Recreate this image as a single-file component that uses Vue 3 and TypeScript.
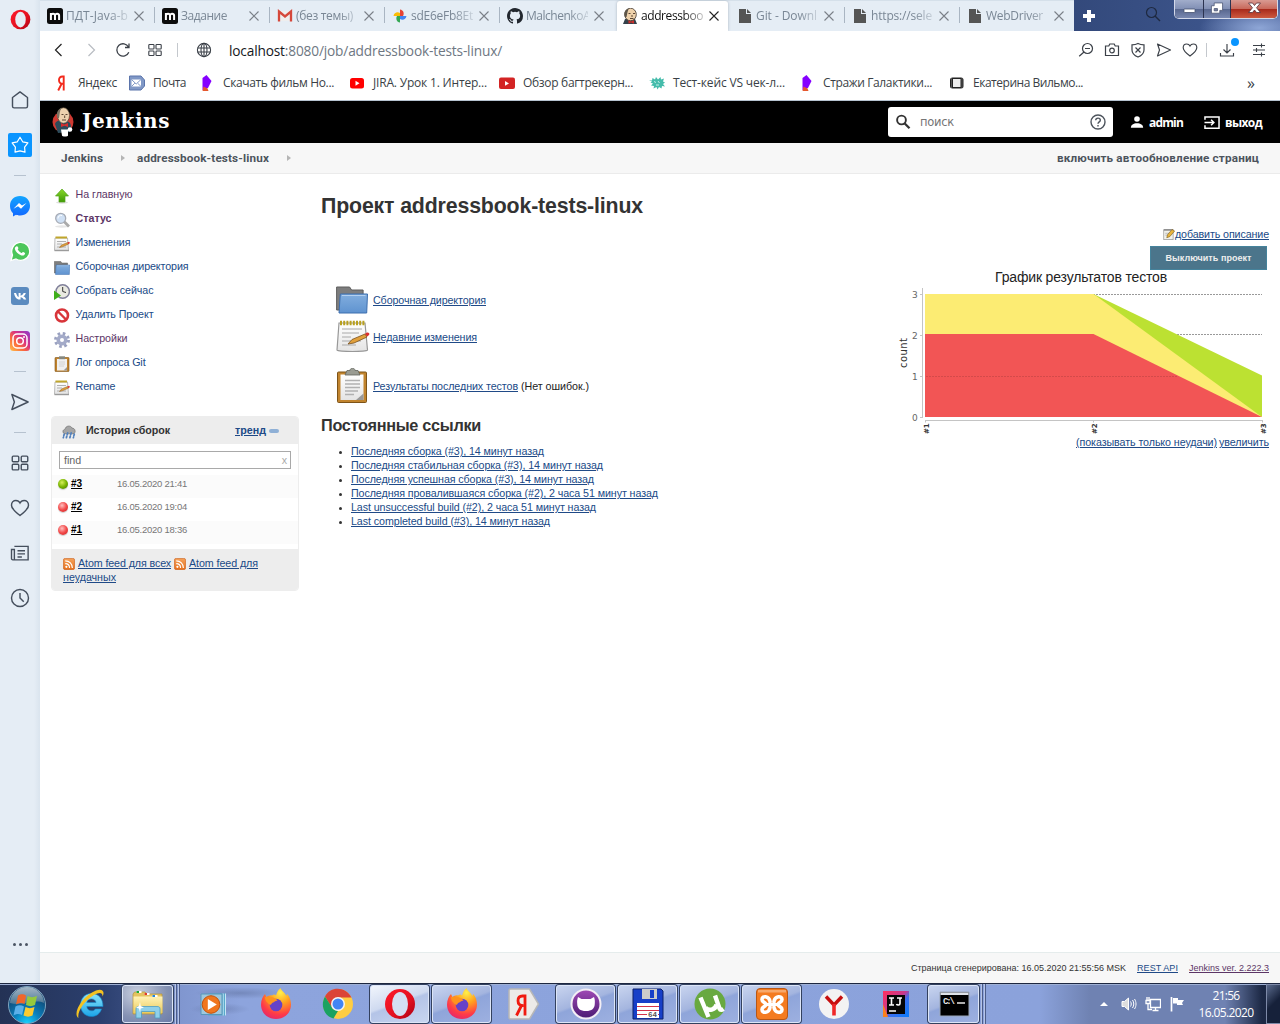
<script setup lang="ts">
interface Tab { icon: string; title: string; width: number; active?: boolean }
interface Item { icon: string; label: string; width: number; bold?: boolean; visited?: boolean }
interface Build { id: string; ok: boolean; date: string }
interface Task { icon: string; kind?: 'open' | 'active' | 'stack' }

// Spreads a label over a given width through letter spacing.
const vFit = {
  mounted(el: HTMLElement, binding: { value: number }) {
    const n = (el.textContent ?? '').trim().length
    const own = el.getBoundingClientRect().width
    if (n && own) el.style.letterSpacing = `${(binding.value - own) / n}px`
  },
}

const tabs: Tab[] = [
  { icon: 'm', title: 'ПДТ-Java-b', width: 62 },
  { icon: 'm', title: 'Задание', width: 46 },
  { icon: 'gmail', title: '(без темы)', width: 57 },
  { icon: 'photos', title: 'sdE6eFb8Et', width: 62 },
  { icon: 'github', title: 'MalchenkoA', width: 64 },
  { icon: 'butler', title: 'addressboo', width: 62, active: true },
  { icon: 'doc', title: 'Git - Downl', width: 61 },
  { icon: 'doc', title: 'https://sele', width: 61 },
  { icon: 'doc', title: 'WebDriver', width: 57 },
]

const rail: string[] = ['home', 'star', '-', 'messenger', 'whatsapp', 'vk', 'insta', '-', 'send', '-', 'grid', 'heart', 'news', 'clock']

const bookmarks = [
  { icon: 'ya', label: 'Яндекс', width: 39, gap: 12 },
  { icon: 'mail', label: 'Почта', width: 33, gap: 13 },
  { icon: 'rocket', label: 'Скачать фильм Но...', width: 111, gap: 15 },
  { icon: 'yt', label: 'JIRA. Урок 1. Интер...', width: 114, gap: 12 },
  { icon: 'yt2', label: 'Обзор багтрекерн...', width: 110, gap: 16 },
  { icon: 'bug', label: 'Тест-кейс VS чек-л...', width: 112, gap: 14 },
  { icon: 'rocket', label: 'Стражи Галактики...', width: 109, gap: 17 },
  { icon: 'film', label: 'Екатерина Вильмо...', width: 110, gap: 0 },
]

const tasks: Item[] = [
  { icon: 'up', label: 'На главную', width: 57, visited: true },
  { icon: 'lens', label: 'Статус', width: 36, bold: true, visited: true },
  { icon: 'note', label: 'Изменения', width: 55 },
  { icon: 'folder', label: 'Сборочная директория', width: 113 },
  { icon: 'run', label: 'Собрать сейчас', width: 78 },
  { icon: 'stop', label: 'Удалить Проект', width: 78 },
  { icon: 'gear', label: 'Настройки', width: 52, visited: true },
  { icon: 'clip', label: 'Лог опроса Git', width: 70 },
  { icon: 'note', label: 'Rename', width: 40 },
]

const builds: Build[] = [
  { id: '#3', ok: true, date: '16.05.2020 21:41' },
  { id: '#2', ok: false, date: '16.05.2020 19:04' },
  { id: '#1', ok: false, date: '16.05.2020 18:36' },
]

const permalinks = [
  { label: 'Последняя сборка (#3), 14 минут назад', width: 193 },
  { label: 'Последняя стабильная сборка (#3), 14 минут назад', width: 252 },
  { label: 'Последняя успешная сборка (#3), 14 минут назад', width: 243 },
  { label: 'Последняя провалившаяся сборка (#2), 2 часа 51 минут назад', width: 307 },
  { label: 'Last unsuccessful build (#2), 2 часа 51 минут назад', width: 245 },
  { label: 'Last completed build (#3), 14 минут назад', width: 199 },
]

const taskbar: Task[] = [
  { icon: 'ie' },
  { icon: 'explorer', kind: 'stack' },
  { icon: 'wmp' },
  { icon: 'firefox' },
  { icon: 'chrome' },
  { icon: 'opera', kind: 'active' },
  { icon: 'firefox', kind: 'open' },
  { icon: 'yatask' },
  { icon: 'ghdesk', kind: 'open' },
  { icon: 'floppy', kind: 'open' },
  { icon: 'utorrent', kind: 'open' },
  { icon: 'xampp', kind: 'open' },
  { icon: 'yabro' },
  { icon: 'idea' },
  { icon: 'cmd', kind: 'stack' },
]
</script>

<template>
  <svg class="sprite" width="0" height="0">
    <defs>
      <linearGradient id="g-opera" x1="0" x2="1" y1="0" y2="1"><stop offset="0" stop-color="#ff1b2d" /><stop offset=".6" stop-color="#e2101f" /><stop offset="1" stop-color="#a70014" /></linearGradient>
      <linearGradient id="g-msg" x1="0" x2="0" y1="0" y2="1"><stop offset="0" stop-color="#12a5ff" /><stop offset="1" stop-color="#1268ff" /></linearGradient>
      <linearGradient id="g-insta" x1="0" x2="1" y1="1" y2="0"><stop offset="0" stop-color="#ffc24a" /><stop offset=".35" stop-color="#fb6a3d" /><stop offset=".6" stop-color="#d83282" /><stop offset="1" stop-color="#8a3bd0" /></linearGradient>
      <linearGradient id="g-folder" x1="0" x2="0" y1="0" y2="1"><stop offset="0" stop-color="#82aede" /><stop offset="1" stop-color="#5f93d0" /></linearGradient>
      <linearGradient id="g-paper" x1="0" x2="0" y1="0" y2="1"><stop offset="0" stop-color="#fff" /><stop offset="1" stop-color="#e4e4e4" /></linearGradient>
      <linearGradient id="g-rss" x1="0" x2="0" y1="0" y2="1"><stop offset="0" stop-color="#f5a25a" /><stop offset="1" stop-color="#e5701c" /></linearGradient>
      <linearGradient id="g-green" x1="0" x2="0" y1="0" y2="1"><stop offset="0" stop-color="#8bd92b" /><stop offset="1" stop-color="#3f9a06" /></linearGradient>
      <radialGradient id="g-orb" cx=".5" cy="1" r=".9"><stop offset="0" stop-color="#18d4ff" /><stop offset=".4" stop-color="#0a80bd" /><stop offset="1" stop-color="#123a63" /></radialGradient>
      <linearGradient id="g-gloss" x1="0" x2="0" y1="0" y2="1"><stop offset="0" stop-color="#d5e2ea" /><stop offset="1" stop-color="#5f7f97" /></linearGradient>
      <radialGradient id="g-ff" cx=".65" cy=".15" r="1"><stop offset="0" stop-color="#fff04a" /><stop offset=".35" stop-color="#ffa01f" /><stop offset=".7" stop-color="#ff3b47" /><stop offset="1" stop-color="#d8207c" /></radialGradient>
      <linearGradient id="g-ie" x1="0" x2="0" y1="0" y2="1"><stop offset="0" stop-color="#8be4fb" /><stop offset="1" stop-color="#1ba4e8" /></linearGradient>
      <linearGradient id="g-gh" x1="0" x2="0" y1="0" y2="1"><stop offset="0" stop-color="#a04ab5" /><stop offset="1" stop-color="#4b1b73" /></linearGradient>
      <linearGradient id="g-yel" x1="0" x2="0" y1="0" y2="1"><stop offset="0" stop-color="#fff3b8" /><stop offset="1" stop-color="#eccb5c" /></linearGradient>
      <linearGradient id="g-idea" x1="0" x2="1" y1="0" y2="1"><stop offset="0" stop-color="#fe315d" /><stop offset=".45" stop-color="#c8388e" /><stop offset=".6" stop-color="#3a6ff0" /><stop offset="1" stop-color="#087cfa" /></linearGradient>
    </defs>

    <!-- Browser tabs -->
    <symbol id="i-m" viewBox="0 0 16 16"><rect width="16" height="16" rx="2.500" fill="#0c0c0c" /><path d="M3.900 12V5M3.900 7.200C4.200 5.600 7.900 5 8 7.400V12M8 7.400c.3-2.300 4-2.100 4.100.2V12" fill="none" stroke="#fff" stroke-width="2" /></symbol>
    <symbol id="i-gmail" viewBox="0 0 16 16"><path d="M1 3h14v10H1z" fill="#eee" /><path d="M2 13.500V3.500l6 5 6-5v10" fill="none" stroke="#d5483b" stroke-width="2.300" /></symbol>
    <symbol id="i-photos" viewBox="0 0 16 16"><path d="M8 1.500c3.500.5 4.500 4 3 6.500H8z" fill="#e84335" /><path d="M14.500 8c-.5 3.500-4 4.500-6.500 3V8z" fill="#4285f4" /><path d="M8 14.500c-3.500-.5-4.500-4-3-6.500h3z" fill="#34a853" /><path d="M1.500 8C2 4.500 5.500 3.500 8 5v3z" fill="#fbbc05" /></symbol>
    <symbol id="i-github" viewBox="0 0 16 16"><path fill="#22272e" d="M8 0C3.580 0 0 3.580 0 8c0 3.540 2.290 6.530 5.470 7.590.4.070.55-.17.55-.38 0-.19-.01-.82-.01-1.490-2.010.37-2.530-.49-2.690-.94-.09-.23-.48-.94-.82-1.130-.28-.15-.68-.52-.01-.53.63-.01 1.080.58 1.230.82.72 1.210 1.870.87 2.330.66.070-.52.28-.87.51-1.070-1.780-.2-3.640-.89-3.640-3.950 0-.87.31-1.590.82-2.150-.08-.2-.36-1.020.08-2.120 0 0 .67-.21 2.200.82a7.500 7.500 0 0 1 4 0c1.530-1.040 2.200-.82 2.200-.82.44 1.100.16 1.920.08 2.120.51.56.82 1.270.82 2.150 0 3.070-1.870 3.750-3.650 3.950.29.25.54.73.54 1.480 0 1.070-.01 1.930-.01 2.200 0 .21.15.46.55.38A8 8 0 0 0 16 8c0-4.420-3.580-8-8-8z" /></symbol>
    <symbol id="i-butler" viewBox="0 0 16 16"><path d="M1 16l2-5h10l2 5z" fill="#34414b" /><ellipse cx="8.500" cy="6.500" rx="5.800" ry="6.300" fill="#efd2ab" stroke="#3c322a" stroke-width=".8" /><path d="M3 9C1.500 5 3 1 7 .4 5.500 2.500 5.500 5 4.500 9z" fill="#5d5548" /><path d="M6.500 5.500h2M11 5.500h2M10 7v2M8 10.500h3.500" stroke="#4b3526" stroke-width=".9" /><path d="M6.500 12.300L9 13.500l3-1.200v3.500l-3-1.200-2.500 1.200z" fill="#c9302c" /></symbol>
    <symbol id="i-doc" viewBox="0 0 16 16"><path d="M2 1h7v5h5v9H2zM10 1l4 4h-4z" fill="#555" /></symbol>
    <symbol id="i-x" viewBox="0 0 10 10"><path d="M.5.5l9 9M9.500.5l-9 9" stroke="currentColor" stroke-width="1.100" /></symbol>
    <symbol id="i-search" viewBox="0 0 16 16"><circle cx="6.500" cy="6.500" r="5" fill="none" stroke="currentColor" stroke-width="1.200" /><path d="M10 10l5 5" stroke="currentColor" stroke-width="1.400" /></symbol>
    <symbol id="i-search-bold" viewBox="0 0 16 16"><circle cx="6.500" cy="6" r="4.400" fill="none" stroke="#333" stroke-width="1.900" /><path d="M9.500 9.200l5 5" stroke="#333" stroke-width="2.300" /></symbol>

    <!-- Address bar -->
    <symbol id="i-back" viewBox="0 0 16 16"><path d="M10.500 2L4.500 8l6 6" fill="none" stroke="currentColor" stroke-width="1.200" /></symbol>
    <symbol id="i-fwd" viewBox="0 0 16 16"><path d="M5.500 2l6 6-6 6" fill="none" stroke="currentColor" stroke-width="1.200" /></symbol>
    <symbol id="i-reload" viewBox="0 0 16 16"><path d="M13.800 10.300A6.200 6.200 0 1 1 13.500 5M14 1.500V5.500H10" fill="none" stroke="currentColor" stroke-width="1.300" /></symbol>
    <symbol id="i-grid" viewBox="0 0 16 16"><g fill="none" stroke="currentColor" stroke-width="1.100"><rect x="1.800" y="2.500" width="5.200" height="4.500" rx=".8" /><rect x="9" y="2.500" width="5.200" height="4.500" rx=".8" /><rect x="1.800" y="9" width="5.200" height="4.500" rx=".8" /><rect x="9" y="9" width="5.200" height="4.500" rx=".8" /></g></symbol>
    <symbol id="i-globe" viewBox="0 0 16 16"><g fill="none" stroke="currentColor" stroke-width="1.100"><circle cx="8" cy="8" r="6.600" /><ellipse cx="8" cy="8" rx="3" ry="6.600" /><path d="M1.500 6h13M1.500 10h13M8 1.500v13" /></g></symbol>
    <symbol id="i-zoomout" viewBox="0 0 16 16"><g fill="none" stroke="currentColor" stroke-width="1.200"><circle cx="9.500" cy="6.500" r="5" /><path d="M6 10l-4.800 4.300M7 6.500h5" /></g></symbol>
    <symbol id="i-camera" viewBox="0 0 16 16"><g fill="none" stroke="currentColor" stroke-width="1.200"><path d="M1.500 4h3.300l1-2h4.400l1 2h3.300v9.500H1.500z" /><circle cx="8" cy="8.500" r="2.300" /></g></symbol>
    <symbol id="i-shield" viewBox="0 0 16 16"><path d="M8 1.500c2 1 4 1.300 6 1.300V8c0 4-3.500 6-6 7-2.500-1-6-3-6-7V2.800c2 0 4-.3 6-1.300zM5.500 5.500l5 5M10.500 5.500l-5 5" fill="none" stroke="currentColor" stroke-width="1.200" /></symbol>
    <symbol id="i-send" viewBox="0 0 16 16"><path d="M1.500 2l13 6-13 6L3.500 8z" fill="none" stroke="currentColor" stroke-width="1.150" stroke-linejoin="round" /></symbol>
    <symbol id="i-heart" viewBox="0 0 16 16"><path d="M8 14C4 11 1.200 8.500 1.200 5.700 1.200 3.500 2.800 2 4.700 2 6.200 2 7.400 2.800 8 4c.6-1.200 1.800-2 3.300-2 1.900 0 3.500 1.500 3.500 3.700C14.800 8.500 12 11 8 14z" fill="none" stroke="currentColor" stroke-width="1.150" /></symbol>
    <symbol id="i-down" viewBox="0 0 16 16"><path d="M8 2v8.500M4.500 7.500L8 11l3.500-3.500M1.500 11v3h13v-3" fill="none" stroke="currentColor" stroke-width="1.150" /></symbol>
    <symbol id="i-tune" viewBox="0 0 16 16"><path d="M2 3.500h12M2 8h12M2 12.500h12M10.500 1.500v4M5.500 6v4M10.500 10.500v4" fill="none" stroke="currentColor" stroke-width="1.100" /></symbol>

    <!-- Browser side rail -->
    <symbol id="i-opera" viewBox="0 0 32 32"><ellipse cx="16" cy="16" rx="15" ry="15" fill="url(#g-opera)" /><ellipse cx="16" cy="16" rx="8" ry="12" fill="var(--hole, #e5edf5)" /></symbol>
    <symbol id="i-home" viewBox="0 0 16 16"><path d="M8 1.500l6 4.500v7a1.300 1.300 0 0 1-1.300 1.300H3.300A1.300 1.300 0 0 1 2 13V6z" fill="none" stroke="currentColor" stroke-width="1.150" stroke-linejoin="round" /></symbol>
    <symbol id="i-star" viewBox="0 0 24 24"><rect width="24" height="24" rx="2" fill="#0a95ff" /><path d="M12 4.200l2.700 4.600 5.200 1.100-3.300 4.200.4 5.100-5-1.400-5 1.400.4-5.100-3.300-4.200 5.200-1.100z" fill="none" stroke="#fff" stroke-width="1.200" stroke-linejoin="round" /></symbol>
    <symbol id="i-messenger" viewBox="0 0 24 24"><path d="M12 2c6 0 10 4.200 10 9.700s-4 9.800-10 9.800c-1.500 0-2.500-.2-4-.8l-3 1.800v-3.300C3 17.200 2 14.800 2 11.700 2 6.200 6 2 12 2z" fill="url(#g-msg)" /><path d="M5.500 14.800L11 9l3 2.500L18.500 9 13 14.800l-3-2.500z" fill="#fff" /></symbol>
    <symbol id="i-whatsapp" viewBox="0 0 24 24"><path d="M3 21.500L4.500 16A9 9 0 1 1 8 20z" fill="#4cc65b" stroke="#fff" stroke-width="1.300" /><path d="M8.700 7.200c.8-.3 1.400.8 1.700 1.800.2.700-.9 1-.6 1.600.8 1.500 2 2.600 3.600 3.400.6.2 1-1.200 1.700-1 1 .4 2.300.9 2 1.800-.5 1.500-2.200 2-3.600 1.600-3.500-1-6-3.600-6.600-6.300-.3-1.400.6-2.500 1.800-2.900z" fill="#fff" /></symbol>
    <symbol id="i-vk" viewBox="0 0 24 24"><rect x="3" y="3" width="18" height="18" rx="3" fill="#5b8bbf" /><path d="M6 9h2c.7 2 1.300 3.300 2.600 4.300V9h2v2.800C14 11.300 15 10.500 15.600 9h2.200c-.4 1.500-1.200 2.500-2.400 3.300 1.300.7 2.200 1.700 2.900 3.200h-2.500c-.6-1-1.600-2-3.200-2.200v2.200h-1C8.500 15.500 6.800 13 6 9z" fill="#fff" /></symbol>
    <symbol id="i-insta" viewBox="0 0 24 24"><rect x="2" y="2" width="20" height="20" rx="3.500" fill="url(#g-insta)" /><rect x="5" y="5" width="14" height="14" rx="4" fill="none" stroke="#fff" stroke-width="1.500" /><circle cx="12" cy="12" r="3.300" fill="none" stroke="#fff" stroke-width="1.500" /><circle cx="16" cy="8" r="1" fill="#fff" /></symbol>
    <symbol id="i-news" viewBox="0 0 16 16"><path d="M3.500 2.500h11v10.800H2.300c-.8 0-1.100-.6-1.100-1.200V5h2.300v8M6 6h6M6 8.500h6M6 11h3.500" transform="translate(0 .2)" fill="none" stroke="currentColor" stroke-width="1.100" /></symbol>
    <symbol id="i-clock" viewBox="0 0 16 16"><circle cx="8" cy="8" r="6.800" fill="none" stroke="currentColor" stroke-width="1.150" /><path d="M8 4v4l3 3" fill="none" stroke="currentColor" stroke-width="1.150" /></symbol>

    <!-- Bookmarks -->
    <symbol id="i-ya" viewBox="0 0 16 16"><path d="M9.500 15.500V1.500H8.300C6 1.500 4.800 3 4.800 5s1.200 3.800 4 3.800M7.300 9L4 15.500" fill="none" stroke="#f22a1c" stroke-width="1.900" transform="translate(.2 0)" /></symbol>
    <symbol id="i-mail" viewBox="0 0 16 16"><path d="M.5 1h11.500l3.500 4v6L12 15H.5z" fill="#8098c6" stroke="#5b74ab" /><rect x="2.500" y="4.500" width="9.500" height="7" fill="#fff" /><path d="M2.500 4.500L7.200 9l4.800-4.500M2.500 11.500l3.300-3.300M12 11.500L8.600 8.200" fill="none" stroke="#8098c6" /></symbol>
    <symbol id="i-rocket" viewBox="0 0 16 16"><path d="M3.500 3l4-3 5 6L9 13l-5.500 2z" fill="#8500ff" /><path d="M3.500 16l1-4.500 4 2L9.500 16z" fill="#e5582e" /></symbol>
    <symbol id="i-yt" viewBox="0 0 16 16"><rect x="1" y="3" width="14" height="10.500" rx="2.500" fill="#f00" /><path d="M6.500 5.800v5l4-2.500z" fill="#fff" /></symbol>
    <symbol id="i-yt2" viewBox="0 0 16 16"><rect x="0" y="2.500" width="16" height="11.500" rx="2" fill="#d32424" /><path d="M6 6v4.800l4-2.400z" fill="#fff" /></symbol>
    <symbol id="i-bug" viewBox="0 0 16 16"><path d="M0 5l3 .5L3.500 3 6 4.500 7 2l2 2.500L11.500 2 12 4.500 15 3.500 14 6.500l2 1-2 1.500 2 2.500-3-.5-.5 2.500L10 12l-1.500 2.500L7.500 12 4.500 13.500 5 11 2 10.500 4 8.500 1.500 7.500 3 6.500z" fill="#45bcab" /><path d="M5 6.500l2 1M9 6l1.500 2M7 10h3" stroke="#c6efe8" /></symbol>
    <symbol id="i-film" viewBox="0 0 16 16"><rect x="1" y="2.500" width="13.500" height="11" rx="2.500" fill="#222" /><rect x="4" y="4" width="7.500" height="8" fill="#eee" /><path d="M2.500 3.500v9M13 3.500v9" stroke="#b7b7b7" stroke-width=".7" stroke-dasharray="1 1" /></symbol>

    <!-- Page header -->
    <symbol id="i-jenkins" viewBox="0 0 22 30"><circle cx="11" cy="15" r="10.500" fill="#cf3a32" /><path d="M3 17c1-3 3-3 5-4l7 1c3 1 4 3 4 6l-1 5-12 1z" fill="#2d4c5b" /><ellipse cx="11.500" cy="8.500" rx="6" ry="7.800" fill="#eed3af" stroke="#54473a" stroke-width=".7" /><path d="M5.500 11C4 6 5.500 2.200 9.500 .9 7.500 4 7.800 7 7 11z" fill="#7b7263" /><path d="M9.500 7.500h2M13.500 7.500h2M12.700 8.500v2.500M10 13h4" stroke="#4b3526" stroke-width=".9" /><path d="M9 16l3 1.500 4-1.500v4l-3.500-1.200L9 20z" fill="#d62d2d" /><path d="M9 22.500h7v6c0 1.300-6 1.300-6 0z" fill="#fff" /><circle cx="18" cy="22.500" r="2.300" fill="#fff" /></symbol>
    <symbol id="i-user" viewBox="0 0 16 16"><circle cx="8" cy="4.500" r="3.200" fill="#fff" /><path d="M1 14.500c0-3 3-5 7-5s7 2 7 5z" fill="#fff" /></symbol>
    <symbol id="i-exit" viewBox="0 0 18 16"><path d="M1.500 5V2h15v12h-15v-3M1 8h9M8 5l3 3-3 3" fill="none" stroke="#fff" stroke-width="1.600" /></symbol>
    <symbol id="i-help" viewBox="0 0 16 16"><circle cx="8" cy="8" r="7" fill="none" stroke="#4d545d" stroke-width="1.400" /><path d="M5.700 6.300C5.700 3.300 10.300 3.400 10.300 6.200 10.300 7.900 8 7.900 8 9.800M8 11v1.500" fill="none" stroke="#4d545d" stroke-width="1.400" /></symbol>

    <!-- Page content -->
    <symbol id="i-up" viewBox="0 0 16 16"><ellipse cx="8" cy="14.500" rx="6" ry="1.200" fill="#ddd" /><path d="M8 1l6.500 7H11v6H5V8H1.500z" fill="url(#g-green)" stroke="#54a51b" stroke-width=".7" /></symbol>
    <symbol id="i-lens" viewBox="0 0 16 16"><ellipse cx="8" cy="14.500" rx="7" ry="1.200" fill="#e6e6e6" /><path d="M10 9.500l5 5" stroke="#aaa" stroke-width="2.800" /><circle cx="6.700" cy="6.300" r="5" fill="#cfe0f4" stroke="#a6abb5" stroke-width="1.300" /><path d="M4 6.500a3 3 0 0 1 4-3" stroke="#fff" fill="none" /></symbol>
    <symbol id="i-note" viewBox="0 0 34 34"><path d="M3 3h26l2.500 27c.2 2-30.700 2-30.500 0z" fill="url(#g-paper)" stroke="#989898" stroke-width="1.200" /><path d="M4 3h25" stroke="#b9a120" stroke-width="4.500" stroke-dasharray="2 1.200" /><path d="M6 9h20M6 13h17M6 17h9M6 21h19M6 25h14" stroke="#aaa" stroke-width="1.200" /><path d="M12 24l4-4.500 13-5.500 2 3-13 6z" fill="#e1a03b" stroke="#785020" stroke-width=".8" /><path d="M29 13.700l2-1.200c2-.6 3.200 1.600 1.700 2.800L31 16.500z" fill="#dc3030" /></symbol>
    <symbol id="i-note-s" viewBox="0 0 16 16"><path d="M1 2h12.500l1 12.200H.5z" fill="url(#g-paper)" stroke="#aaa" stroke-width=".8" /><path d="M.5 14.700h14.500" stroke="#8f8f8f" /><path d="M1.500 1.500H13" stroke="#c0a62c" stroke-width="2" /><path d="M3 5.500h9M3 8h5M3 11h9" stroke="#b0b0b0" /><path d="M5.500 11.500l2-2.500 6-2.500.8 1.700-6 2.600z" fill="#e1a03b" stroke="#8a5f25" stroke-width=".5" /><path d="M13.500 6.500l1.500-.8 1 1.300-1.700 1.200z" fill="#dc3030" /></symbol>
    <symbol id="i-folder" viewBox="0 0 32 28"><path d="M.6 1h13l2 3h11.500v20H.6z" fill="#7d7d7d" stroke="#5f5f5f" /><path d="M4.300 8h27.200l-.8 19H3z" fill="url(#g-folder)" stroke="#3d6eae" /><path d="M6 9.500h23.500" stroke="#b4d0ef" /></symbol>
    <symbol id="i-run" viewBox="0 0 16 16"><circle cx="8.700" cy="7.500" r="6.700" fill="#e9e9e1" stroke="#80809a" stroke-width="1.500" /><path d="M8.700 3v4.500l3.300 1" stroke="#333" fill="none" /><path d="M0 6.500l7 5-7 4.500z" fill="#3fae1a" /></symbol>
    <symbol id="i-stop" viewBox="0 0 16 16"><circle cx="8" cy="7.500" r="6" fill="#fff" stroke="#d8353a" stroke-width="2.600" /><path d="M4 3.500l8 8" stroke="#d8353a" stroke-width="2.400" /></symbol>
    <symbol id="i-gear" viewBox="0 0 16 16"><circle cx="8" cy="8" r="6.500" fill="none" stroke="#9aa1c0" stroke-width="3" stroke-dasharray="2.550" /><circle cx="8" cy="8" r="5.500" fill="#a3aac8" /><circle cx="8" cy="8" r="2" fill="#fff" /></symbol>
    <symbol id="i-clip" viewBox="0 0 32 36"><rect x="1.500" y="4" width="29" height="30.500" rx="1" fill="#c1842e" stroke="#7d5317" /><path d="M4.500 6.500h23V32h-23z" fill="url(#g-paper)" /><path d="M11 2.500h3c0-3 5-3 5 0h3l2 4.500H9z" fill="#9a9c93" stroke="#62645d" stroke-width=".8" /><path d="M9 12.500h15M9 16h15M9 19.500h15M9 23h13M9 26.500h9" stroke="#b1b1b1" stroke-width="1.300" /><path d="M27.500 25.500V32H20z" fill="#999" /></symbol>
    <symbol id="i-clip-s" viewBox="0 0 16 16"><rect x="1" y="1.500" width="14" height="14" rx=".6" fill="#c1842e" stroke="#7d5317" stroke-width=".6" /><path d="M3 3h10v11.500H3z" fill="#f0f0f0" /><path d="M5 .3h6v2.900H5z" fill="#85877f" /><path d="M5 6h6M5 8h6M5 10h5" stroke="#ccc" stroke-width=".8" /><path d="M13 11v3.500H9.500z" fill="#999" /></symbol>
    <symbol id="i-rain" viewBox="0 0 16 16"><path d="M3.500 10C0 9.500.5 5 3.500 5 4 .5 10 0 11.500 3.500c4 0 5 6 1 6.500z" fill="#a5a5a5" stroke="#747474" stroke-width=".8" /><path d="M2.500 10.500l-1 4M6.500 9l-1.500 5.500M10.500 9L9 14.500M14 10.500l-1 4" stroke="#5482bd" stroke-width="2" stroke-linecap="round" stroke-dasharray="2 1.800" /></symbol>
    <symbol id="i-rss" viewBox="0 0 16 16"><rect x=".5" y=".5" width="15" height="15" rx="2.500" fill="url(#g-rss)" stroke="#cf6a28" /><circle cx="4.500" cy="11.800" r="1.500" fill="#fff" /><path d="M3 7.500c3.500 0 5.700 2.300 5.700 5.800M3 3.800c5.500 0 9.500 4 9.500 9.500" fill="none" stroke="#fff" stroke-width="1.600" /></symbol>
    <symbol id="i-edit" viewBox="0 0 16 16"><rect x="1" y="2.500" width="12.500" height="13" fill="#f2f2ec" stroke="#999" /><path d="M1 2.500h12.500" stroke="#888" stroke-width="2" /><path d="M3 7h7M3 9.500h5" stroke="#aaa" /><path d="M5 13l1-4 6-7 3.500 2-6.500 7.500z" fill="#e9b63e" stroke="#7a5b1e" stroke-width=".8" /></symbol>

    <!-- System taskbar -->
    <symbol id="i-ie" viewBox="0 0 32 32"><path d="M27.500 21C26 26 22 28.500 17.500 28.500 10.500 28.500 6.500 23 6.500 17S10.500 5.500 17.500 5.500 29 10.500 29 18.500H12.800c.3 5 7 5.500 8.500 2.500zM12.800 14.500H22c-.3-4.500-8.500-5-9.200 0z" fill="url(#g-ie)" stroke="#1487c9" stroke-width=".6" /><path d="M4.500 30C-2 26 8 8 22 2.500 29 0 31 4 28.500 8.500 28.800 4 25 4 20 7 10 13 3 24 4.500 30z" fill="#f3c222" /></symbol>
    <symbol id="i-explorer" viewBox="0 0 32 32"><path d="M1 6l1.500-2H13l2 2h15v20H1z" fill="#e4c361" stroke="#b5933b" stroke-width=".7" /><path d="M1.500 8.500h29V25h-29z" fill="url(#g-yel)" /><path d="M4.500 4h5M12.500 6h5M20.500 8h5" stroke-width="2" stroke="#fff" /><path d="M4.500 4h2.500" stroke="#18a832" stroke-width="2" /><path d="M12.500 6H15" stroke="#e23a28" stroke-width="2" /><path d="M20.500 8H23" stroke="#2185df" stroke-width="2" /><path d="M4 30V21c0-2 1-2.500 3-2.500h18c2 0 3 .5 3 2.500v9h-5v-6.500H9.500V30z" fill="#8fd0ea" stroke="#4e9dc3" stroke-width=".8" /><path d="M8 14l.7 4 3.300 1.500-3.300 1-.7 4-1-4-3-1 3-1.500z" fill="#fff" /></symbol>
    <symbol id="i-wmp" viewBox="0 0 32 32"><path d="M10 5.500h18v22H10z" fill="#59a9cb" /><path d="M25.200 5.500v22M27.500 5.500v22" stroke="#c4e6f5" /><path d="M3 6h21v20.500H3z" fill="#9fc8dd" stroke="#5697ba" /><circle cx="13" cy="16.500" r="8.800" fill="#f0761e" stroke="#c4520c" /><path d="M9.800 11v11l9-5.500z" fill="#fff" /></symbol>
    <symbol id="i-firefox" viewBox="0 0 32 32"><path d="M16 31C7.500 31 1 25 1 16.500 1 12 3 8 5 6l1.500 3C8 8 10 7 12 7.500 14 6 15 6.500 16 7.500 17 4 18 2 20.500 0c1 3 4 4 6 8l.5-2c2.500 2 4 6.500 4 10.500C31 25 24.500 31 16 31z" fill="url(#g-ff)" /><circle cx="16" cy="17" r="6.300" fill="#6642c7" /><path d="M5 9c3 0 4 .5 6 0 2 .3 5 1.300 6.500 3.500-3 .5-3.500 2-5.500 2.500-1 3-3 1.500-4 0-2-1-3-3.500-3-6z" fill="#ff931d" /></symbol>
    <symbol id="i-chrome" viewBox="0 0 32 32"><circle cx="16" cy="16" r="15" fill="#ffcd42" /><path d="M3 8.500C8-2 24-2 29.500 9.500H16L10 20z" fill="#db4437" /><path d="M3 8.500L11 21l5 2-4.500 7.400C2 28-2 17 3 8.500z" fill="#1ba261" /><circle cx="16" cy="16" r="7" fill="#f5f5f5" /><circle cx="16" cy="16" r="5.500" fill="#4285f4" /></symbol>
    <symbol id="i-yatask" viewBox="0 0 32 32"><path d="M2.500 1h19l9 15-9 15h-19c-1 0-1.500-.5-1.500-1.500v-27C1 1.500 1.500 1 2.500 1z" fill="#eceae8" stroke="#b7b7b7" stroke-width="1.500" /><path d="M17 27.500V8h-2.500C11 8 10 10 10 12.700s1.200 5 5.500 5M13.500 17.500L8.500 27.500" fill="none" stroke="#f01a10" stroke-width="2.800" /></symbol>
    <symbol id="i-ghdesk" viewBox="0 0 32 32"><circle cx="16" cy="16" r="14.500" fill="url(#g-gh)" stroke="#f2eef5" stroke-width="2" /><path d="M8 9l3.500 2h9L24 9c.9 2.500 1 4 .8 6.500 0 5-3 7.500-8.800 7.500s-8.800-2.500-8.800-7.500C7 13 7.200 11.500 8 9z" fill="#fff" /></symbol>
    <symbol id="i-floppy" viewBox="0 0 32 32"><path d="M1 1h28l2 2v28H1z" fill="#173fc8" stroke="#0c2168" /><path d="M10 1h15v10H10z" fill="#cbcbcb" /><path d="M18 2h4v8h-4z" fill="#173fc8" /><path d="M5 15h22v15H5z" fill="#fff" /><path d="M5 18.500h22M5 22.500h22M5 26.500h10M27 26.500h-1" stroke="#d3344a" stroke-width="1.200" /></symbol>
    <symbol id="i-utorrent" viewBox="0 0 32 32"><circle cx="16" cy="16" r="15.500" fill="#68a940" /><path d="M6.500 9.500l8 19.500M21 7.500l4.500 13c.8 1.800 2.500 1.500 4 .5M11.500 19.500c3 4 10 2.500 11-3" fill="none" stroke="#fff" stroke-width="4.400" /></symbol>
    <symbol id="i-xampp" viewBox="0 0 32 32"><rect x=".5" y=".5" width="31" height="31" rx="3.500" fill="#f47b20" stroke="#b75716" /><path d="M2 2h28v2.500H2z" fill="#f8a86a" /><path d="M14 13c-1-6-8-6-8-2 0 3 3 2 4 5-1 3-4 2-4 5 0 4 7 4 8-2M18 13c1-6 8-6 8-2 0 3-3 2-4 5 1 3 4 2 4 5 0 4-7 4-8-2M12 16h8" transform="translate(0 .5)" fill="none" stroke="#fff" stroke-width="3.600" stroke-linecap="round" stroke-linejoin="round" /></symbol>
    <symbol id="i-yabro" viewBox="0 0 32 32"><circle cx="16" cy="16" r="15" fill="#f3f3f3" /><path d="M8 8.500l8 8.500 8-8.500" fill="none" stroke="#c60f0f" stroke-width="3.400" /><path d="M16 16v11.500" stroke="#f02828" stroke-width="3.600" /></symbol>
    <symbol id="i-idea" viewBox="0 0 32 32"><path d="M3 3h26v26H3z" fill="url(#g-idea)" /><path d="M3 16l5 13H3z" fill="#fc801d" /><path d="M7 7h18v19H7z" fill="#050505" /><path d="M9 10h5M11.500 10v7M9 17h5M17 10h5M20 10v5.500c0 2-3 1.800-3.500 .5M9 23h7" stroke="#fff" stroke-width="1.600" fill="none" /></symbol>
    <symbol id="i-cmd" viewBox="0 0 32 32"><path d="M2 4h29v24H2z" fill="#000" stroke="#9aa6b8" /><path d="M2.500 4.500h28V7h-28z" fill="#dfe3e9" /><path d="M19 15h8" stroke="#e8e8e8" stroke-width="1.500" /></symbol>
  </svg>

  <div class="screen">
    <div class="browser">
      <aside class="rail">
        <svg class="rail-logo"><use href="#i-opera" /></svg>
        <nav class="rail-nav">
          <template v-for="(r, i) in rail" :key="i">
            <i v-if="r === '-'" class="rail-line"></i>
            <span v-else class="rail-item"><svg :class="['messenger', 'whatsapp', 'vk', 'insta', 'star'].includes(r) ? 's24' : 's20'"><use :href="'#i-' + r" /></svg></span>
          </template>
        </nav>
        <span class="rail-dots"><i></i><i></i><i></i></span>
      </aside>

      <div class="window">
        <header class="tabstrip">
          <div v-for="(t, i) in tabs" :key="i" class="tab" :class="{ active: t.active }">
            <svg class="s16"><use :href="'#i-' + t.icon" /></svg>
            <span class="tab-title"><span v-fit="t.width">{{ t.title }}</span></span>
            <svg class="tab-x"><use href="#i-x" /></svg>
          </div>
          <div class="aero">
            <span class="plus"></span>
            <svg class="s16 aero-search"><use href="#i-search" /></svg>
            <div class="controls">
              <span class="ctl"><svg viewBox="0 0 28 18"><rect x="9" y="9" width="11" height="3.500" rx=".5" fill="#fff" stroke="#45506e" stroke-width=".8" /></svg></span>
              <span class="ctl"><svg viewBox="0 0 28 18"><path d="M11 2.500h9v8h-3v3H8V5.500h3z" fill="#fff" stroke="#45506e" stroke-width=".8" /><path d="M11 8.500h3.500v2.500H11z" fill="#77809f" stroke="#45506e" stroke-width=".8" /></svg></span>
              <span class="ctl close"><svg viewBox="0 0 46 18"><path d="M17.500 3h4l2 2.500L25.500 3h4l-4 4.800 4 4.700h-4L23.500 10l-2 2.500h-4l4-4.700z" fill="#fff" stroke="#55303a" stroke-width=".8" /></svg></span>
            </div>
          </div>
        </header>

        <div class="address">
          <svg class="s16 nav-back"><use href="#i-back" /></svg>
          <svg class="s16 nav-fwd"><use href="#i-fwd" /></svg>
          <svg class="s16 nav-ico"><use href="#i-reload" /></svg>
          <svg class="s16 nav-ico"><use href="#i-grid" /></svg>
          <i class="vline"></i>
          <svg class="s16 nav-globe"><use href="#i-globe" /></svg>
          <span v-fit="273" class="url"><b>localhost</b>:8080/job/addressbook-tests-linux/</span>
          <div class="address-tools">
            <svg class="s16"><use href="#i-zoomout" /></svg>
            <svg class="s16"><use href="#i-camera" /></svg>
            <svg class="s16"><use href="#i-shield" /></svg>
            <svg class="s16"><use href="#i-send" /></svg>
            <svg class="s16"><use href="#i-heart" /></svg>
            <i class="vline"></i>
            <span class="download"><svg class="s16"><use href="#i-down" /></svg><i></i></span>
            <svg class="s16"><use href="#i-tune" /></svg>
          </div>
        </div>

        <div class="bookmarks">
          <span v-for="(b, i) in bookmarks" :key="i" class="bookmark" :style="{ marginRight: b.gap + 'px' }">
            <svg class="s16"><use :href="'#i-' + b.icon" /></svg>
            <span v-fit="b.width">{{ b.label }}</span>
          </span>
          <span class="more">»</span>
        </div>

        <div class="page">
          <div class="j-head">
            <svg class="j-logo"><use href="#i-jenkins" /></svg>
            <span v-fit="88" class="j-name">Jenkins</span>
            <div class="j-search">
              <svg class="j-search-ico"><use href="#i-search-bold" /></svg>
              <span v-fit="34">поиск</span>
              <svg class="s16"><use href="#i-help" /></svg>
            </div>
            <svg class="j-user"><use href="#i-user" /></svg>
            <b v-fit="34" class="j-link">admin</b>
            <svg class="j-exit"><use href="#i-exit" /></svg>
            <b v-fit="37" class="j-link">выход</b>
          </div>

          <div class="crumbs">
            <b v-fit="42">Jenkins</b><i class="arrow"></i><b v-fit="132">addressbook-tests-linux</b><i class="arrow"></i>
            <b v-fit="202" class="crumbs-right">включить автообновление страниц</b>
          </div>

          <div class="body">
            <aside class="side">
              <ul class="tasks">
                <li v-for="t in tasks" :key="t.label">
                  <svg class="s16 task-ico"><use :href="'#i-' + t.icon + (t.icon === 'note' || t.icon === 'clip' ? '-s' : '')" /></svg>
                  <span v-fit="t.width" :class="{ bold: t.bold, visited: t.visited }">{{ t.label }}</span>
                </li>
              </ul>

              <section class="history">
                <div class="history-head">
                  <svg class="s16"><use href="#i-rain" /></svg>
                  <b v-fit="84">История сборок</b>
                  <b v-fit="31" class="trend">тренд</b>
                  <i class="collapse"></i>
                </div>
                <div class="find"><span>find</span><span class="find-x">x</span></div>
                <div v-for="b in builds" :key="b.id" class="build">
                  <i class="ball" :class="{ ok: b.ok }"></i>
                  <b>{{ b.id }}</b>
                  <span v-fit="70" class="date">{{ b.date }}</span>
                </div>
                <div class="feeds">
                  <svg class="rss"><use href="#i-rss" /></svg><a v-fit="93">Atom feed для всех</a>
                  <svg class="rss second"><use href="#i-rss" /></svg><a v-fit="69">Atom feed для</a><br>
                  <a v-fit="53">неудачных</a>
                </div>
              </section>
            </aside>

            <main class="main">
              <div class="details">
                <h1 v-fit="322">Проект addressbook-tests-linux</h1>
                <div class="big big-folder"><svg class="b-folder"><use href="#i-folder" /></svg><a v-fit="113">Сборочная директория</a></div>
                <div class="big big-note"><svg class="b-note"><use href="#i-note" /></svg><a v-fit="104">Недавние изменения</a></div>
                <div class="big big-clip"><svg class="b-clip"><use href="#i-clip" /></svg><a v-fit="145">Результаты последних тестов</a><span v-fit="68" class="note">(Нет ошибок.)</span></div>
                <h2 v-fit="160">Постоянные ссылки</h2>
                <ul class="perma">
                  <li v-for="p in permalinks" :key="p.label"><a v-fit="p.width">{{ p.label }}</a></li>
                </ul>
              </div>

              <div class="trendbox">
                <div class="describe"><svg class="s12"><use href="#i-edit" /></svg><a v-fit="94">добавить описание</a></div>
                <button class="disable"><span v-fit="86">Выключить проект</span></button>
                <div class="chart-title"><span v-fit="172">График результатов тестов</span></div>
                <svg class="chart" viewBox="0 0 380 148" width="380" height="148">
                  <g stroke="#999" stroke-width="1" stroke-dasharray="2 1"><path d="M35 7.500h337M35 47.500h337M35 89.500h337" /></g>
                  <path d="M35 7h168.500L372 88.500V130z" fill="#bce132" />
                  <path d="M35 7h168.500L372 130H35z" fill="#fcec73" />
                  <path d="M35 47h168.500L372 130H35z" fill="#f25555" />
                  <path d="M36 89.500h252" stroke="#d44a4a" stroke-dasharray="2 1" />
                  <path d="M32.500 1v130M30 7.500h3M30 48.500h3M30 89.500h3M30 130.500h3M35 133.500h337.500M35.500 133v2.500M203.500 133v2.500M372.500 133v2.500" fill="none" stroke="#c4c4c4" />
                  <g class="axis"><text x="22" y="11">3</text><text x="22" y="51.500">2</text><text x="22" y="92.500">1</text><text x="22" y="134">0</text></g>
                  <text class="count" transform="translate(17 81) rotate(-90)" textLength="30">count</text>
                  <g class="runs"><text transform="translate(38.500 147) rotate(-90)">#1</text><text transform="translate(206.500 147) rotate(-90)">#2</text><text transform="translate(375.500 147) rotate(-90)">#3</text></g>
                </svg>
                <div class="chart-links"><a v-fit="141">(показывать только неудачи)</a><a v-fit="50">увеличить</a></div>
              </div>
            </main>
          </div>

          <footer class="foot">
            <span v-fit="215">Страница сгенерирована: 16.05.2020 21:55:56 MSK</span>
            <a v-fit="41" class="rest">REST API</a>
            <a v-fit="80" class="visited">Jenkins ver. 2.222.3</a>
          </footer>
        </div>
      </div>
    </div>

    <div class="taskbar">
      <span class="start">
        <svg viewBox="0 0 40 40"><circle cx="20" cy="20" r="18.500" fill="url(#g-orb)" stroke="#7fa5c0" stroke-width="1" /><path d="M3 18a17 16 0 0 1 34 0c-10-5-22 4-34 0z" fill="url(#g-gloss)" opacity=".75" /><path d="M11 10.500c3-2 6-1.500 8 0L17.500 19c-3-1.500-5-1.500-8.500.5z" fill="#f0662b" /><path d="M20.500 11c3 1.500 6 1.500 9.500 0L28 20c-3 1.500-6 1.500-9 0z" fill="#95c93d" /><path d="M8.500 21.500c3-2 6-1.500 8.500 0L15 30c-3-1.500-5.500-1.500-8.500.5z" fill="#5bb0e9" /><path d="M18.500 22c3 1.500 5.500 1.500 9 0l-2 8.500c-3 1.500-6 1.500-9 0z" fill="#fccb2f" /></svg>
      </span>
      <span v-for="(t, i) in taskbar" :key="i" class="slot" :class="t.kind">
        <span class="slot-in">
          <svg class="s32" viewBox="0 0 32 32">
            <use :href="'#i-' + t.icon" />
            <text v-if="t.icon === 'floppy'" class="floppy-text" x="16" y="29">64</text>
            <text v-if="t.icon === 'cmd'" class="cmd-text" x="5" y="16" textLength="12">C:\</text>
          </svg>
        </span>
      </span>
      <div class="tray">
        <svg class="tray-up" viewBox="0 0 8 4"><path d="M0 4l4-4 4 4z" fill="#fff" /></svg>
        <svg class="tray-ico" viewBox="0 0 16 16"><path d="M1 5.500h2.500L7.500 2v12L3.500 10.500H1z" fill="#ddd" stroke="#fff" /><path d="M9.500 5.500c1 1.500 1 3.500 0 5M11.500 4c1.700 2.500 1.700 5.500 0 8M13.500 3c2 3 2 7 0 10" stroke="#fff" fill="none" /></svg>
        <svg class="tray-ico" viewBox="0 0 16 16"><path d="M5.500 3.500h10v8h-10zM7.500 14.500h6M10.500 12v2M2 1v3M4 1v3M1 4.500h4v3H1zM3 8v5.500h4" fill="none" stroke="#fff" stroke-width="1.300" /></svg>
        <svg class="tray-ico" viewBox="0 0 16 16"><path d="M2.500 1v14.500" stroke="#fff" stroke-width="1.700" /><path d="M4 2h5v2h6l-2 3 1 2H8V7.500H4z" fill="#fff" /></svg>
        <div class="when"><span v-fit="27">21:56</span><span v-fit="55">16.05.2020</span></div>
      </div>
      <i class="show-desktop"></i>
    </div>
  </div>
</template>

<style>
body { margin: 0; }
</style>

<style scoped>
* { box-sizing: border-box; }
.sprite { position: absolute; }
.screen { width: 1280px; height: 1024px; overflow: hidden; display: flex; flex-direction: column; font-family: "Liberation Sans", Arial, sans-serif; font-size: 10.700px; color: #333; background: #fff; }
.screen span, .screen b, .screen a { white-space: nowrap; }
svg { display: block; flex: none; }
.s16 { width: 16px; height: 16px; }
.s12 { width: 12px; height: 12px; }
.s20 { width: 20px; height: 20px; }
.s24 { width: 24px; height: 24px; }
.s32 { width: 32px; height: 32px; }
a { color: #204a87; text-decoration: underline; }
.visited { color: #5c3566; }

.browser { height: 983px; display: flex; }

/* Rail */
.rail { width: 40px; display: flex; flex-direction: column; align-items: center; background: linear-gradient(90deg, #e5edf5 85%, #dae4ee); color: #454f5d; }
.rail-logo { width: 21px; height: 21px; margin-top: 9px; }
.rail-nav { display: flex; flex-direction: column; align-items: center; margin-top: 47px; }
.rail-item { height: 45px; display: flex; align-items: center; }
.rail-line { width: 12px; height: 1px; margin: 8px 0 7px; background: #b6c2cf; }
.rail-dots { display: flex; gap: 3px; margin: auto 0 37px; }
.rail-dots i { width: 3px; height: 3px; border-radius: 50%; background: #4b5564; }

/* Tab strip */
.window { width: 1240px; display: flex; flex-direction: column; }
.tabstrip { height: 31px; display: flex; background: #e5edf5; border-top: 1px solid #d5e0ea; font-family: "Open Sans", "Noto Sans", sans-serif; font-size: 12px; color: #7a8795; }
.tab { width: 115px; display: flex; align-items: center; padding: 0 0 1px 7px; box-shadow: 1px 0 transparent; background: linear-gradient(#a9b5c2, #a9b5c2) right 6px / 1px 16px no-repeat; }
.tab:nth-child(5), .tab:nth-child(9) { background: none; }
.tab-title { width: 62px; margin-left: 3px; overflow: hidden; mask-image: linear-gradient(90deg, #000 68%, rgba(0, 0, 0, .25)); }
.tab-x { width: 10px; height: 10px; margin-left: 6px; color: #7b8188; }
.tab.active { width: 111px; margin: 0 2px; padding-left: 5px; background: #fff; color: #111; border-radius: 3px 3px 0 0; box-shadow: 0 0 3px #a8b3bf; clip-path: inset(-1px -3px 0); }
.tab.active .tab-x { color: #222; }
.aero { flex: 1; display: flex; margin: -1px 0 0 -1px; background: radial-gradient(ellipse 60px 22px at 90% 90%, #8ea6d6, transparent), linear-gradient(90deg, #33497b, #3b5389 60%, #4c639b); }
.plus { width: 12px; height: 12px; margin: 10px 0 0 9px; background: linear-gradient(#fff, #fff) center / 12px 4px no-repeat, linear-gradient(#fff, #fff) center / 4px 12px no-repeat; }
.aero-search { margin: 6px 0 0 50px; color: #1e2940; }
.controls { width: 104px; height: 19px; display: flex; margin-left: 13px; border: 1px solid #d3d9ea; border-top: 0; border-radius: 0 0 5px 5px; overflow: hidden; background: #2b3350; gap: 1px; }
.ctl { width: 28px; background: linear-gradient(#a1adcb, #8290b5 48%, #58678f 52%, #7988b0); }
.ctl:nth-child(2) { width: 26px; }
.ctl svg { height: 18px; width: 100%; }
.ctl.close { flex: 1; background: linear-gradient(#d99a92, #c96a5c 48%, #a82a1c 52%, #cd5a40); }

/* Address bar */
.address { height: 38px; display: flex; align-items: center; color: #3b4048; font-family: "Open Sans", "Noto Sans", sans-serif; font-size: 13.700px; }
.nav-back { margin-left: 11px; color: #222; }
.nav-fwd { margin-left: 16px; color: #b8bcc2; }
.nav-ico { margin-left: 16px; }
.vline { width: 1px; height: 14px; background: #c4c8cd; }
.nav-ico + .vline { margin-left: 14px; }
.nav-globe { margin: 0 17px 0 18px; }
.url { color: #6e7782; }
.url b { font-weight: 400; color: #15181c; }
.address-tools { margin-left: auto; margin-right: 13px; display: flex; align-items: center; gap: 10px; }
.address-tools .vline { margin: 0 2px 0 -2px; }
.download { position: relative; margin-right: 6px; }
.download i { position: absolute; left: 12px; top: -4px; width: 8px; height: 8px; border-radius: 50%; background: #0a95ff; }

/* Bookmarks */
.bookmarks { height: 32px; padding: 0 25px 4px 14px; display: flex; align-items: center; border-bottom: 1px solid #b6c3d0; font-family: "Open Sans", "Noto Sans", sans-serif; font-size: 12px; color: #3a3f46; }
.bookmark { display: flex; align-items: center; gap: 8px; }
.more { margin-left: auto; font-size: 16px; line-height: 16px; }

/* Page header */
.page { flex: 1; display: flex; flex-direction: column; }
.j-head { height: 42px; background: #000; display: flex; align-items: center; color: #fff; font-family: "Open Sans", "Noto Sans", sans-serif; }
.j-logo { width: 22px; height: 30px; margin-left: 12px; }
.j-name { margin-left: 8px; padding-bottom: 2px; font: 700 20px "DejaVu Serif", serif; }
.j-search { width: 225px; height: 30px; margin-left: auto; padding: 0 7px; display: flex; align-items: center; background: #fff; border-radius: 3px; color: #757575; font-family: "DejaVu Sans", sans-serif; font-size: 11.500px; }
.j-search-ico { width: 16px; height: 16px; margin-right: 9px; }
.j-search .s16 { margin-left: auto; }
.j-user { width: 14px; height: 14px; margin-left: 17px; }
.j-link { margin-left: 5px; font-size: 12px; font-weight: 700; }
.j-exit { width: 18px; height: 15px; margin-left: 20px; }
.j-link:last-child { margin: 0 18px 0 4px; }
.crumbs { height: 31px; padding: 0 21px 0 21px; display: flex; align-items: center; background: #f7f7f7; border-bottom: 1px solid #ebebeb; font-family: Roboto, sans-serif; font-size: 11.700px; color: #4d545d; }
.arrow { margin: 0 12px 0 18px; border: 3px solid transparent; border-left: 4px solid #b5b5b5; border-right: 0; }
.crumbs-right { margin-left: auto; }

/* Side panel */
.body { height: 778px; display: flex; }
.side { width: 270px; padding: 8px 0 0 11px; }
.tasks { list-style: none; margin: 0; padding: 0; }
.tasks li { height: 24px; display: flex; align-items: center; padding-left: 3px; color: #204a87; }
.tasks span { margin: -1px 0 0 5.500px; }
.task-ico { margin-top: 3px; }
.tasks .bold { font-weight: 700; }
.tasks .visited { color: #5c3566; }
.history { width: 248px; height: 175px; margin-top: 18px; border: 1px solid #ededed; border-radius: 4px; overflow: hidden; }
.history-head { height: 27px; display: flex; align-items: center; padding-left: 10px; background: #ededed; color: #333; }
.history-head .s16 { width: 14px; height: 14px; margin-top: 2px; }
.history-head b { margin: -1px 0 0 10px; }
.history-head .trend { margin-left: auto; color: #204a87; text-decoration: underline; }
.collapse { width: 10px; height: 4px; margin: 1px 19px 0 3px; background: #8fb0d6; border-radius: 2px; }
.find { height: 18px; margin: 7px 7px 6px; padding: 0 3px 0 4px; display: flex; align-items: center; justify-content: space-between; border: 1px solid #a9a9a9; color: #666; }
.find-x { color: #aaa; }
.build { height: 23px; display: flex; padding: 3px 0 0 6px; line-height: 12px; }
.build:nth-child(odd) { background: #fbfbfb; }
.build b { width: 45px; margin-left: 3px; font-size: 10px; color: #000; text-decoration: underline; }
.ball { width: 10px; height: 10px; margin-top: 1px; border-radius: 50%; background: radial-gradient(circle at 40% 35%, #ffc0c0, #f24a4a 50%, #c91d1d); box-shadow: 0 1px 1px #ccc; }
.ball.ok { background: radial-gradient(circle at 40% 35%, #d5ef58, #78b300 50%, #3d7000); }
.date { margin-left: 1px; font-size: 9.500px; color: #777; }
.feeds { height: 42px; margin-top: 5px; padding: 7px 0 0 11px; background: #ededed; line-height: 14px; }
.rss { display: inline-block; width: 12px; height: 12px; vertical-align: -3px; margin-right: 3px; }
.rss.second { margin-left: 3px; }

/* Main panel */
.main { flex: 1; display: flex; justify-content: space-between; padding: 0 11px; }
.details { display: flex; flex-direction: column; align-items: flex-start; color: #333; }
h1 { margin: 20px 0 67px; font-size: 21.300px; line-height: 24px; white-space: nowrap; }
h2 { margin: 8px 0 10px; font-size: 16.300px; line-height: 18px; white-space: nowrap; }
.big { display: flex; align-items: center; padding-left: 15px; }
.b-folder { width: 32px; height: 28px; margin-right: 5px; }
.b-note { width: 34px; height: 34px; margin-right: 3px; }
.b-clip { width: 32px; height: 36px; margin-right: 5px; }
.big-folder { height: 30px; }
.big-note { height: 44px; }
.big-clip { height: 45px; margin-top: 4px; }
.note { margin-left: 3px; color: #222; }
.perma { margin: 0; padding: 0 0 0 30px; }
.perma li { height: 14px; line-height: 14px; }
.perma li::marker { font-size: 9px; }

/* Test trend */
.trendbox { width: 380px; display: flex; flex-direction: column; align-items: flex-end; }
.describe { display: flex; align-items: center; height: 14px; margin-top: 53px; }
.disable { width: 117px; height: 24px; margin: 5px 2px 0 0; padding: 0; background: #4b758b; border: 1px solid #45839c; color: #eee; font: 700 9px "Liberation Sans", Arial, sans-serif; }
.chart-title { width: 380px; height: 17px; padding: 0 0 0 106px; line-height: 15px; font-size: 14px; color: #222; }
.chart { margin-right: -1px; }
.axis { font: 9px "DejaVu Sans", sans-serif; fill: #666; }
.count { font: 10px "DejaVu Sans", sans-serif; fill: #333; }
.runs { font: 700 7px "DejaVu Sans", sans-serif; fill: #333; }
.chart-links { display: flex; gap: 2px; margin-top: -1px; line-height: 16px; }

/* Footer */
.foot { height: 31px; padding: 0 11px; display: flex; align-items: center; justify-content: flex-end; background: #f7f7f7; border-top: 1px solid #e5ecec; font-size: 9px; color: #333; }
.foot .rest { margin: 0 11px; }

/* Taskbar */
.taskbar { height: 41px; display: flex; border-top: 1px solid #1d2740; box-shadow: inset 0 1px #9fb0d4; background: radial-gradient(ellipse 45px 6px at 240px 9px, rgba(70, 85, 125, .35), transparent), radial-gradient(ellipse 30px 6px at 220px 25px, rgba(70, 85, 125, .3), transparent), linear-gradient(90deg, #243255 0, #2b3f6e 100px, #35497b 125px, #8096cf 180px, #8da4dd 240px, #8ba2db 1040px, #6f82b2 1090px, #6f82b2 1225px, #1c2844 1262px); }
.start { width: 58px; padding: 1px 0 0 7px; }
.start svg { width: 40px; height: 40px; }
.slot { width: 62px; padding: 1px 1px 1px 2px; display: flex; }
.slot-in { flex: 1; display: flex; align-items: center; justify-content: center; }
.open .slot-in, .active .slot-in, .stack .slot-in { border: 1px solid #dce5f7; border-radius: 3px; box-shadow: 0 0 0 1px #33415f; background: linear-gradient(160deg, #c8d4ef, #a4b5df 45%, #8fa5da 50%, #9db0e0); }
.active .slot-in { --hole: #d4dff3; background: linear-gradient(160deg, #f1f5fc, #cfdaf0 45%, #b4c4e7 50%, #c8d5f0); }
.stack { padding-right: 9px; background: linear-gradient(90deg, #b6c4e6 1px, #4b5c8a 1px 2px, transparent 2px 3px, #b6c4e6 3px 4px, #4b5c8a 4px 5px, transparent 5px) 55px 0 / 8px 100% no-repeat; }
.stack:nth-child(3) .slot-in { background: radial-gradient(ellipse at 30% 20%, #c9d0e0, #8592b3 60%, #6b7ca9); }
.floppy-text { font: 700 7.500px "Liberation Mono", monospace; fill: #555; }
.cmd-text { font: 700 9px "Liberation Mono", monospace; fill: #e8e8e8; }
.tray { margin-left: auto; display: flex; align-items: center; color: #fff; }
.tray-up { width: 8px; height: 4px; }
.tray-ico { width: 16px; height: 16px; margin-left: 8px; }
.tray-up + .tray-ico { margin-left: 13px; }
.when { width: 74px; margin: 0 3px 0 4px; display: flex; flex-direction: column; align-items: center; font: 12px/17px "Open Sans", "Noto Sans", sans-serif; }
.show-desktop { width: 14px; border: 1px solid #7e8aa8; border-right: 0; background: linear-gradient(135deg, #5a6a8c, #16213a 50%); }
</style>
